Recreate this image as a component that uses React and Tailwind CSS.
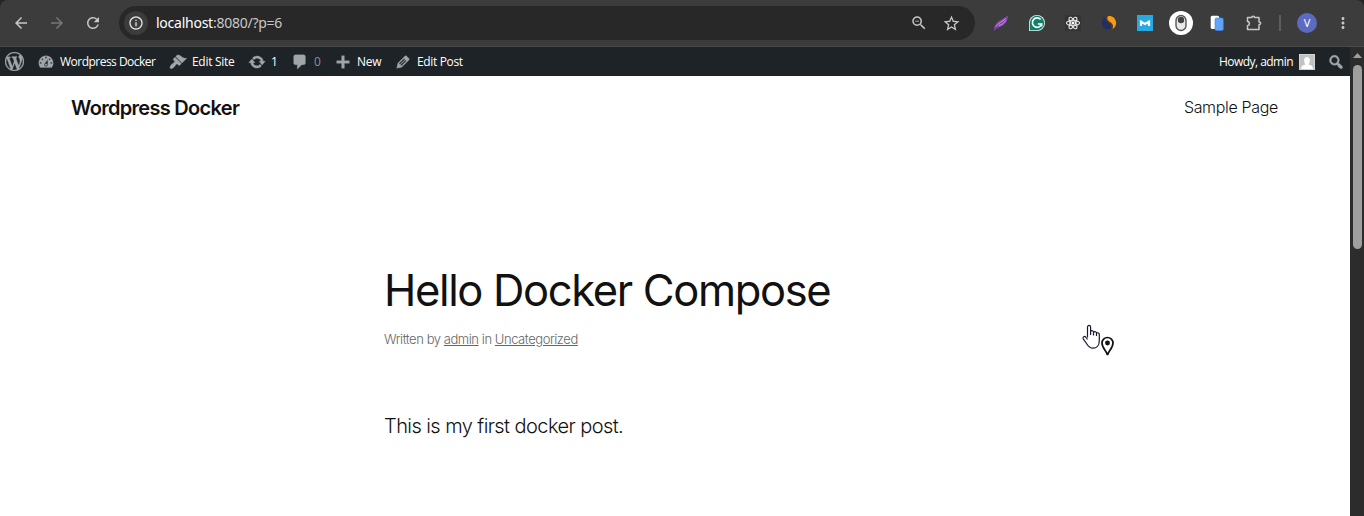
import React from "react";
import {
  MdArrowBack,
  MdArrowForward,
  MdRefresh,
  MdInfoOutline,
  MdZoomOut,
  MdStarOutline,
  MdMoreVert,
} from "react-icons/md";
import { FaReact } from "react-icons/fa";

const DASHICONS = {
  wordpress:
    "M20 10c0-5.51-4.49-10-10-10C4.48 0 0 4.49 0 10c0 5.52 4.48 10 10 10 5.51 0 10-4.48 10-10zM7.78 15.37L4.37 6.22c.55-.02 1.17-.08 1.17-.08.5-.06.44-1.13-.06-1.11 0 0-1.45.11-2.37.11-.18 0-.37 0-.58-.01C4.12 2.69 6.87 1.11 10 1.11c2.33 0 4.45.87 6.05 2.34-.68-.11-1.65.39-1.65 1.58 0 .74.45 1.36.9 2.1.35.61.55 1.36.55 2.46 0 1.49-1.4 5-1.4 5l-3.03-8.37c.54-.02.82-.17.82-.17.5-.05.44-1.25-.06-1.22 0 0-1.44.12-2.38.12-.87 0-2.33-.12-2.33-.12-.5-.03-.56 1.2-.06 1.22l.92.08 1.26 3.41zM17.41 10c.24-.64.74-1.87.43-4.25.7 1.29 1.05 2.71 1.05 4.25 0 3.29-1.73 6.24-4.4 7.78.97-2.59 1.94-5.2 2.92-7.78zM6.1 18.09C3.12 16.65 1.11 13.53 1.11 10c0-1.3.23-2.48.72-3.59C3.25 10.3 4.67 14.2 6.1 18.09zm4.03-6.63l2.58 6.98c-.86.29-1.76.45-2.71.45-.79 0-1.57-.11-2.29-.33.81-2.38 1.62-4.74 2.42-7.1z",
  dashboard:
    "M3.76 16h12.48c1.1-1.37 1.76-3.11 1.76-5 0-4.42-3.58-8-8-8s-8 3.58-8 8c0 1.89.66 3.63 1.76 5zM10 4c.55 0 1 .45 1 1s-.45 1-1 1-1-.45-1-1 .45-1 1-1zM6 6c.55 0 1 .45 1 1s-.45 1-1 1-1-.45-1-1 .45-1 1-1zm8 0c.55 0 1 .45 1 1s-.45 1-1 1-1-.45-1-1 .45-1 1-1zm-5.37 5.55L12 7v6c0 1.1-.9 2-2 2s-2-.9-2-2c0-.57.24-1.08.63-1.45zM4 10c.55 0 1 .45 1 1s-.45 1-1 1-1-.45-1-1 .45-1 1-1zm12 0c.55 0 1 .45 1 1s-.45 1-1 1-1-.45-1-1 .45-1 1-1zm-5 3c0-.55-.45-1-1-1s-1 .45-1 1 .45 1 1 1 1-.45 1-1z",
  brush:
    "M14.48 11.06L7.41 3.99l1.5-1.5c.5-.56 2.3-.47 3.51.32 1.21.8 1.43 1.28 2.91 2.1 1.18.64 2.45 1.26 4.45.85zm-.71.71L6.7 4.7 4.93 6.47c-.39.39-.39 1.02 0 1.41l1.06 1.06c.39.39.39 1.03 0 1.42-.6.6-1.43 1.11-2.21 1.69-.35.26-.7.53-1.01.84C1.43 14.23.4 16.08 1.4 17.07c.99 1 2.84-.03 4.18-1.36.31-.31.58-.66.85-1.02.57-.78 1.08-1.61 1.69-2.21.39-.39 1.02-.39 1.41 0l1.06 1.06c.39.39 1.02.39 1.41 0z",
  update:
    "M10.2 3.28c3.53 0 6.43 2.61 6.92 6h2.08l-3.5 4-3.5-4h2.32c-.45-1.97-2.21-3.45-4.32-3.45-1.45 0-2.73.71-3.54 1.78L4.95 5.66C6.23 4.2 8.11 3.28 10.2 3.28zm-.4 13.44c-3.52 0-6.43-2.61-6.92-6H.8l3.5-4c1.17 1.33 2.33 2.67 3.5 4H5.48c.45 1.97 2.21 3.45 4.32 3.45 1.45 0 2.73-.71 3.54-1.78l1.71 1.95c-1.28 1.46-3.15 2.38-5.25 2.38z",
  comment:
    "M5 2h9c1.1 0 2 .9 2 2v7c0 1.1-.9 2-2 2h-2l-5 5v-5H5c-1.1 0-2-.9-2-2V4c0-1.1.9-2 2-2z",
  plus: "M17 8.500v3h-5.500v5.500H8.500v-5.500H3V8.500h5.500V3h3v5.500z",
  edit: "M13.89 3.39l2.71 2.72c.46.46.42 1.24.03 1.64l-8.01 8.02-5.56 1.16 1.16-5.58s7.6-7.63 7.99-8.03c.39-.39 1.22-.39 1.68.07zm-2.73 2.79l-5.59 5.61 1.11 1.11 5.54-5.65zm-2.97 8.23l5.58-5.6-1.07-1.08-5.59 5.6z",
  search:
    "M12.14 4.18c1.87 1.87 2.11 4.75.72 6.89.12.1.22.21.36.31.2.16.47.36.81.59.34.24.56.39.66.47.42.31.73.57.94.78.32.32.6.65.84 1 .25.35.44.69.59 1.04.14.35.21.68.18 1-.02.32-.14.59-.36.81s-.49.34-.81.36c-.31.02-.65-.04-.99-.19-.35-.14-.7-.34-1.04-.59-.35-.24-.68-.52-1-.84-.21-.21-.47-.52-.77-.93-.1-.13-.25-.35-.47-.66-.22-.32-.4-.57-.56-.78-.16-.2-.29-.35-.44-.5-2.07 1.09-4.69.76-6.44-.98-2.14-2.15-2.14-5.64 0-7.78 2.15-2.15 5.63-2.15 7.78 0zm-1.41 6.36c1.36-1.37 1.36-3.58 0-4.95-1.37-1.37-3.59-1.37-4.95 0-1.37 1.37-1.37 3.58 0 4.95 1.36 1.37 3.58 1.37 4.95 0z",
};

function Dashicon({ name, className = "size-[18px]" }) {
  return (
    <svg viewBox="0 0 20 20" className={`shrink-0 fill-[#a0a5aa] ${className}`}>
      <path d={DASHICONS[name]} stroke="#a0a5aa" strokeWidth=".35" />
    </svg>
  );
}

function Cell({ children }) {
  return <div className="flex w-9 shrink-0 items-center justify-center">{children}</div>;
}

function Extensions() {
  return (
    <div className="ml-2 flex">
      <Cell>
        <svg viewBox="0 0 16 16" className="size-4">
          <path d="M1 16C.6 11 3 7.500 8 4.800L15 .4C15 4.500 13.500 8 10 10.500 7.500 12.300 4 12 1 16Z" fill="#8441ad" />
          <path d="M3 11.500C5 8.500 9 6.500 13 3.500M6 10.700C9 9.700 11.500 7.500 12.800 5.500" fill="none" stroke="#cfa0e6" strokeWidth=".9" />
        </svg>
      </Cell>
      <Cell>
        <svg viewBox="0 0 16 16" className="size-4">
          <path d="M0 16V8a8 8 0 1 1 8 8Z" fill="#dff3ee" />
          <path d="M.8 15.200V8A7.200 7.200 0 1 1 8 15.200Z" fill="#11806a" />
          <path d="M11.600 4.500A4.700 4.700 0 1 0 12.600 9H8.800M12.600 9V11.600" fill="none" stroke="#fff" strokeWidth="1.700" />
        </svg>
      </Cell>
      <Cell>
        <div className="flex size-4 items-center justify-center bg-[#333333]">
          <FaReact className="size-[14px] text-white" stroke="white" strokeWidth="14" />
        </div>
      </Cell>
      <Cell>
        <svg viewBox="0 0 16 16" className="size-4">
          <path d="M4.500 1.700C1.500 3.200 .9 6 1.100 8.500 1.400 12 4 14.500 7 14.600 9.500 14.600 10.400 12.500 9.800 10.500 9.200 8.200 6.800 8 5.300 6.200 4.200 4.800 4 3.200 4.500 1.700Z" fill="#222d63" />
          <path d="M7.500 1C11.500 .7 14.900 3.500 15.100 7.500 15.200 10.500 13.800 13 11.400 14 12.300 12 12.100 10.300 11.300 9 10 6.900 7.200 6.700 6.500 4.500 6 2.800 6.500 1.400 7.500 1Z" fill="#fa9a0c" />
        </svg>
      </Cell>
      <Cell>
        <svg viewBox="0 0 16 16" className="size-4">
          <path d="M0 0H16V16H0Z" fill="#29a9e1" />
          <path d="M4 11V6.600L8 9 12 6.600V11" fill="none" stroke="#fff" strokeWidth="2.200" />
        </svg>
      </Cell>
      <Cell>
        <div className="flex size-6 items-center justify-center rounded-full bg-white">
          <svg viewBox="0 0 16 18" className="h-[18px] w-4">
            <rect x="3" y="1.500" width="10" height="15" rx="5" fill="#e9e9e9" stroke="#555" strokeWidth="1.400" />
            <circle cx="8" cy="6" r="3.200" fill="#444" />
          </svg>
        </div>
      </Cell>
      <Cell>
        <svg viewBox="0 0 16 16" className="size-4">
          <rect x="1.700" y=".8" width="8.500" height="13.200" rx="1.500" fill="#fff" />
          <rect x="6" y="3" width="8.300" height="12.500" rx="1.500" fill="#60a3f8" stroke="#3f83e8" strokeWidth=".6" />
        </svg>
      </Cell>
      <Cell>
        <svg viewBox="0 0 18 18" className="ml-px size-[18px]" fill="none" stroke="#c7c7c7" strokeWidth="1.500">
          <path d="M2.500 3.500H6.800C6.800 1.700 9.600 1.700 9.600 3.500H14V7.900C16.200 7.900 16.200 10.700 14 10.700V15.500H2.500V11.700C5 11.500 5 7.700 2.500 7.500Z" strokeLinejoin="round" />
        </svg>
      </Cell>
    </div>
  );
}

function BrowserToolbar() {
  return (
    <div className="bg-[#252525]">
      <header className="flex h-[47px] items-stretch rounded-t-lg border-b border-[#4a4a4a] bg-[#3c3c3c] pl-[3px] font-['Noto_Sans','Open_Sans',sans-serif]">
        <Cell>
          <MdArrowBack className="size-[18px] text-[#c7c7c7]" />
        </Cell>
        <Cell>
          <MdArrowForward className="size-[18px] text-[#777777]" />
        </Cell>
        <Cell>
          <MdRefresh className="size-[18px] text-[#c7c7c7]" />
        </Cell>
        <div className="my-1.5 ml-2 flex h-[34px] w-[856px] items-center rounded-full bg-[#282828] pl-[5px] pr-3.5">
          <div className="flex size-6 items-center justify-center rounded-full bg-[#3c3c3c]">
            <MdInfoOutline className="size-4 text-[#e3e3e3]" />
          </div>
          <div className="ml-2 flex-1 text-sm tracking-[-0.25px] text-[#c7c7c7]">
            <span className="text-white">localhost</span>:8080/?p=6
          </div>
          <MdZoomOut className="mr-[14px] size-[18px] text-[#c7c7c7]" />
          <MdStarOutline className="size-[19px] text-[#c7c7c7]" />
        </div>
        <Extensions />
        <div className="ml-2 h-4 w-0.5 self-center bg-[#5e5e5e]" />
        <div className="ml-4 flex size-5 items-center justify-center self-center rounded-full bg-[#5c6bc0] text-[11px] text-white">
          V
        </div>
        <MdMoreVert className="ml-[17px] size-[18px] self-center text-[#c7c7c7]" />
      </header>
    </div>
  );
}

function BarItem({ icon, label, className = "", dim = false }) {
  return (
    <div className={`flex shrink-0 items-center gap-[5px] ${className}`}>
      <Dashicon name={icon} />
      <span className={dim ? "text-[#8c9196]" : "text-white"}>{label}</span>
    </div>
  );
}

function AdminBar() {
  return (
    <nav className="flex h-[29px] items-center bg-[#1d2327] font-['Open_Sans',sans-serif] text-xs">
      <Dashicon name="wordpress" className="ml-[5px] size-[19px]" />
      <BarItem icon="dashboard" label="Wordpress Docker" className="ml-[13px] w-[132px] tracking-[-0.52px]" />
      <BarItem icon="brush" label="Edit Site" className="w-[79px] tracking-[-0.3px]" />
      <BarItem icon="update" label="1" className="w-[43px]" />
      <BarItem icon="comment" label="0" className="w-[43px]" dim />
      <BarItem icon="plus" label="New" className="w-[60px] tracking-[-0.2px]" />
      <BarItem icon="edit" label="Edit Post" className="tracking-[-0.35px]" />
      <span className="ml-auto tracking-[-0.53px] text-white">Howdy, admin</span>
      <svg viewBox="0 0 16 16" className="ml-1.5 size-4">
        <path d="M0 0H16V16H0Z" fill="#d3d3d3" />
        <path d="M1 1H15V15H1Z" fill="#c2c2c2" />
        <path d="M2 15C2 12 4 11 6.500 10.500 4.500 8 4.500 3 8 3S11.500 8 9.500 10.500C12 11 14 12 14 15Z" fill="#fff" />
      </svg>
      <Dashicon name="search" className="ml-3 mr-[5px] size-[18px]" />
    </nav>
  );
}

function Scrollbar() {
  return (
    <div className="flex w-3.5 shrink-0 flex-col items-center bg-[#2c2c2c] pt-1.5">
      <svg viewBox="0 0 9 5" className="ml-px h-[5px] w-[9px] fill-[#9f9f9f]">
        <path d="M4.500 0L9 5H0Z" />
      </svg>
      <div className="ml-px mt-[7px] h-[184px] w-[9px] rounded-full bg-[#9f9f9f]" />
    </div>
  );
}

function Pointer() {
  return (
    <svg viewBox="0 0 34 34" className="absolute left-[1081px] top-[247px] size-[34px]">
      <path
        d="M6.500 14.500V4.200C6.500 1.800 9.600 1.800 9.600 4.200V12M9.600 8.300C10.800 7.100 12.500 7.700 12.500 9.200V12.500M12.500 9.200C13.800 8.100 15.500 8.700 15.500 10.200V13M15.500 10.200C17 9.200 18.300 10 18.300 11.500V17.500C18.300 22.500 15.800 25.200 12 25.200 8.500 25.200 7 23 5.500 20.500L2.200 15.800C1.300 14.300 3.300 12.700 4.600 14L6.500 16.500"
        fill="#fff"
        stroke="#15182e"
        strokeWidth="1.200"
        strokeLinejoin="round"
      />
      <path d="M26.500 32C25.500 28 21 25 21 20A5.500 5.500 0 0 1 32 20C32 25 27.500 28 26.500 32Z" fill="#fff" stroke="#111" strokeWidth="1.700" />
      <circle cx="26.500" cy="20" r="2.400" fill="#111" />
    </svg>
  );
}

function PostPage() {
  return (
    <div className="relative h-[440px] bg-white font-[Inter,sans-serif] text-[#111111]">
      <div className="flex h-[62px] items-center justify-between pl-[71px] pr-[72px]">
        <div className="pt-0.5 text-[20px] font-semibold tracking-[-0.7px]">Wordpress Docker</div>
        <div className="text-base font-light tracking-[-0.33px]">Sample Page</div>
      </div>
      <main className="pl-[384px] pt-[125px]">
        <h1 className="text-[43.5px] leading-[54px] font-normal tracking-[-1.35px]">Hello Docker Compose</h1>
        <p className="mt-3 text-[13px] leading-[21px] font-light tracking-[-0.44px] text-[#666666]">
          Written by <span className="underline">admin</span> in <span className="underline">Uncategorized</span>
        </p>
        <p className="mt-[62px] text-[20px] leading-7 font-light tracking-[-0.57px]">This is my first docker post.</p>
      </main>
      <Pointer />
    </div>
  );
}

export default function App() {
  return (
    <div className="h-[516px] w-[1364px] overflow-hidden">
      <BrowserToolbar />
      <div className="flex h-[469px]">
        <div className="w-[1350px]">
          <AdminBar />
          <PostPage />
        </div>
        <Scrollbar />
      </div>
    </div>
  );
}
